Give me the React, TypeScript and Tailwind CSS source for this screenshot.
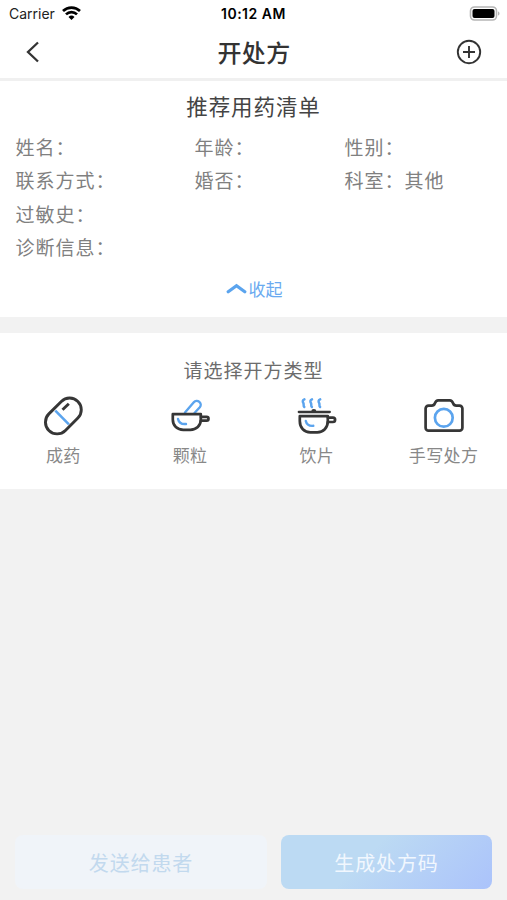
function StatusBar() {
  return (
    <div className="relative flex h-[26px] items-center justify-between pl-[9px] pr-[7px] font-[Inter,sans-serif] text-black">
      <div className="flex items-center gap-[7px]">
        <span className="pt-[2px] text-[14px] leading-6 text-[#222]">Carrier</span>
        <svg width="19" height="14" viewBox="0 0 19 14" fill="none" stroke="currentColor" strokeWidth="2.7">
          <path d="M1 5a12.300 12.300 0 0 1 17 0" />
          <path d="M4 8.400a7.800 7.800 0 0 1 11 0" />
          <path d="M9.500 14 6.500 11a4.300 4.300 0 0 1 6 0z" fill="currentColor" stroke="none" />
        </svg>
      </div>
      <span className="absolute left-[221px] top-[2px] whitespace-nowrap text-[14px] font-semibold leading-6 tracking-[0.500px]">
        10:12 AM
      </span>
      <svg width="31" height="15" viewBox="0 0 31 15">
        <rect x="1.500" y="1" width="26" height="13" rx="4" fill="#fff" stroke="#b5b5b5" strokeWidth="1.600" />
        <rect x="3.500" y="3" width="22" height="9" rx="2" fill="#000" />
        <path d="M29 5.400c2 .7 2 3.500 0 4.200z" fill="#b5b5b5" />
      </svg>
    </div>
  )
}

function PillIcon() {
  return (
    <svg width="42" height="42" viewBox="0 0 42 42" fill="none" strokeWidth="2.900">
      <path d="m13.300 15.700 13.600 13.600" stroke="#5ba4ee" strokeWidth="2.600" />
      <rect x="0.900" y="9.300" width="41" height="23.400" rx="11.700" transform="rotate(-45 21.300 21)" stroke="#363636" />
      <path d="m20.500 14.800 6.300-6" stroke="#363636" />
    </svg>
  )
}

function MortarIcon() {
  return (
    <svg width="42" height="42" viewBox="0 0 42 42" fill="none" strokeWidth="2.700" strokeLinecap="round" strokeLinejoin="round">
      <path d="m16 17.500 8.800-10.200a3.900 3.900 0 0 1 6 5L25.500 18" stroke="#5ba4ee" strokeWidth="2.400" />
      <path d="M3.800 19.200h28v5.300c0 6.500-4.500 10.300-10.500 10.300h-7c-6 0-10.500-3.800-10.500-10.300z" stroke="#363636" />
      <path d="M32 21.900h5.600a1.900 1.900 0 0 1 0 3.800H32" stroke="#363636" />
      <path d="M9 24c.8 3.500 3 5.500 8 5" stroke="#5ba4ee" strokeWidth="2.400" />
    </svg>
  )
}

function PotIcon() {
  return (
    <svg width="42" height="42" viewBox="0 0 42 42" fill="none" strokeWidth="2.700" strokeLinecap="round" strokeLinejoin="round">
      <path
        d="M8.400 4.400c-2 .9-1.900 2.300-1 3.800.7 1.200-.4 2.800.9 3.800M16 4.400c-2 .9-1.900 2.300-1 3.800.7 1.200-.4 2.800.9 3.800M24.200 4.400c-2 .9-1.900 2.300-1 3.800.7 1.200-.4 2.800.9 3.800"
        stroke="#5ba4ee"
        strokeWidth="2.500"
      />
      <path d="M2.800 17h31" stroke="#363636" strokeWidth="2.300" />
      <path d="M15.300 16.200a2.500 2.200 0 0 1 5 0z" fill="#363636" />
      <path d="M3.800 21.200h28v4.800c0 7-4.500 11.300-10.500 11.300h-7c-6 0-10.500-4.300-10.500-11.300z" stroke="#363636" />
      <path d="M32 22.600h4.900a2.200 2.200 0 0 1 0 4.400h-5" stroke="#363636" />
      <path d="M9.800 26c.8 3.500 3 5.200 7.500 4.800" stroke="#5ba4ee" strokeWidth="2.400" />
    </svg>
  )
}

function CameraIcon() {
  return (
    <svg width="42" height="42" viewBox="0 0 42 42" fill="none" strokeWidth="2.700" strokeLinejoin="round">
      <path
        d="M5.500 10.600h3.200c2.200 0 2.600-.6 3.200-2.300.7-2 1.300-3 3.300-3h11.600c2 0 2.600 1 3.300 3 .6 1.700 1 2.300 3.200 2.300h3.200a2.900 2.900 0 0 1 2.900 2.900v19.300a2.900 2.900 0 0 1-2.900 2.900h-31a2.900 2.900 0 0 1-2.900-2.900V13.500a2.900 2.900 0 0 1 2.900-2.900z"
        stroke="#363636"
      />
      <circle cx="20.800" cy="22.800" r="8.900" stroke="#5ba4ee" />
    </svg>
  )
}

const info = [
  ["姓名：", "年龄：", "性别："],
  ["联系方式：", "婚否：", "科室：其他"],
  ["过敏史："],
  ["诊断信息："],
]

const types = [
  { icon: PillIcon, label: "成药" },
  { icon: MortarIcon, label: "颗粒" },
  { icon: PotIcon, label: "饮片" },
  { icon: CameraIcon, label: "手写处方" },
]

export default function App() {
  return (
    <div className="flex h-[900px] w-[507px] flex-col bg-[#f2f2f2] font-['Noto_Sans_CJK_SC',sans-serif]" lang="zh-CN">
      <header className="h-[81px] border-b-[3px] border-[#f0f0f0] bg-white">
        <StatusBar />
        <div className="grid h-[52px] grid-cols-[1fr_auto_1fr] items-center pl-[26px] pr-[25px] text-[#333]">
          <svg width="14" height="22" viewBox="0 0 14 22" fill="none" stroke="currentColor" strokeWidth="2.300">
            <path d="M12 1.500 2 11l10 9.500" />
          </svg>
          <h1 className="text-[24px] font-medium leading-8 tracking-[0.400px]">开处方</h1>
          <svg className="justify-self-end" width="26" height="26" viewBox="0 0 26 26" fill="none" stroke="currentColor" strokeWidth="1.900">
            <circle cx="13" cy="13" r="11.200" />
            <path d="M13 7v12M7 13h12" />
          </svg>
        </div>
      </header>

      <section className="h-[236px] bg-white">
        <h2 className="pt-[9px] text-center text-[21.500px] leading-8 tracking-[0.900px] text-[#444]">推荐用药清单</h2>
        <div className="mt-[8px] pl-[15.500px] text-[19px] leading-[33.400px] tracking-[1px] text-[#808080]">
          {info.map((row) => (
            <div key={row[0]} className="grid grid-cols-[179px_150px_1fr]">
              {row.map((cell) => (
                <span key={cell}>{cell}</span>
              ))}
            </div>
          ))}
        </div>
        <div className="mt-[13px] flex items-center justify-center gap-[2px] pl-px text-[17px] leading-6 text-[#6aaaf0]">
          <svg width="21" height="12" viewBox="0 0 21 12" fill="none" stroke="#5ba4ee" strokeWidth="3.200" strokeLinecap="round">
            <path d="m2.200 8.700 8.300-6 8.300 6" />
          </svg>
          收起
        </div>
      </section>

      <section className="mt-4 h-[156px] bg-white">
        <h2 className="pt-[21px] text-center text-[19px] leading-8 tracking-[1px] text-[#6c6c6c]">请选择开方类型</h2>
        <div className="mt-[9px] grid grid-cols-4">
          {types.map((type) => {
            const Icon = type.icon
            return (
              <div key={type.label} className="flex flex-col items-center">
                <Icon />
                <span className="mt-[6px] text-[17px] leading-6 tracking-[0.400px] text-[#888]">{type.label}</span>
              </div>
            )
          })}
        </div>
      </section>

      <footer className="mt-auto flex gap-[14px] pb-[11px] pl-[15px] pr-[15px]">
        <button className="h-[54px] w-[252px] rounded-lg bg-[#f0f4f9] pt-px text-[20px] tracking-[0.900px] text-[#c2d9ee]">发送给患者</button>
        <button className="h-[54px] flex-1 rounded-lg bg-linear-[135deg,#bcdaf3_40%,#abc3fb] pt-px text-[20px] tracking-[0.900px] text-[#f1f7fe]">
          生成处方码
        </button>
      </footer>
    </div>
  )
}
